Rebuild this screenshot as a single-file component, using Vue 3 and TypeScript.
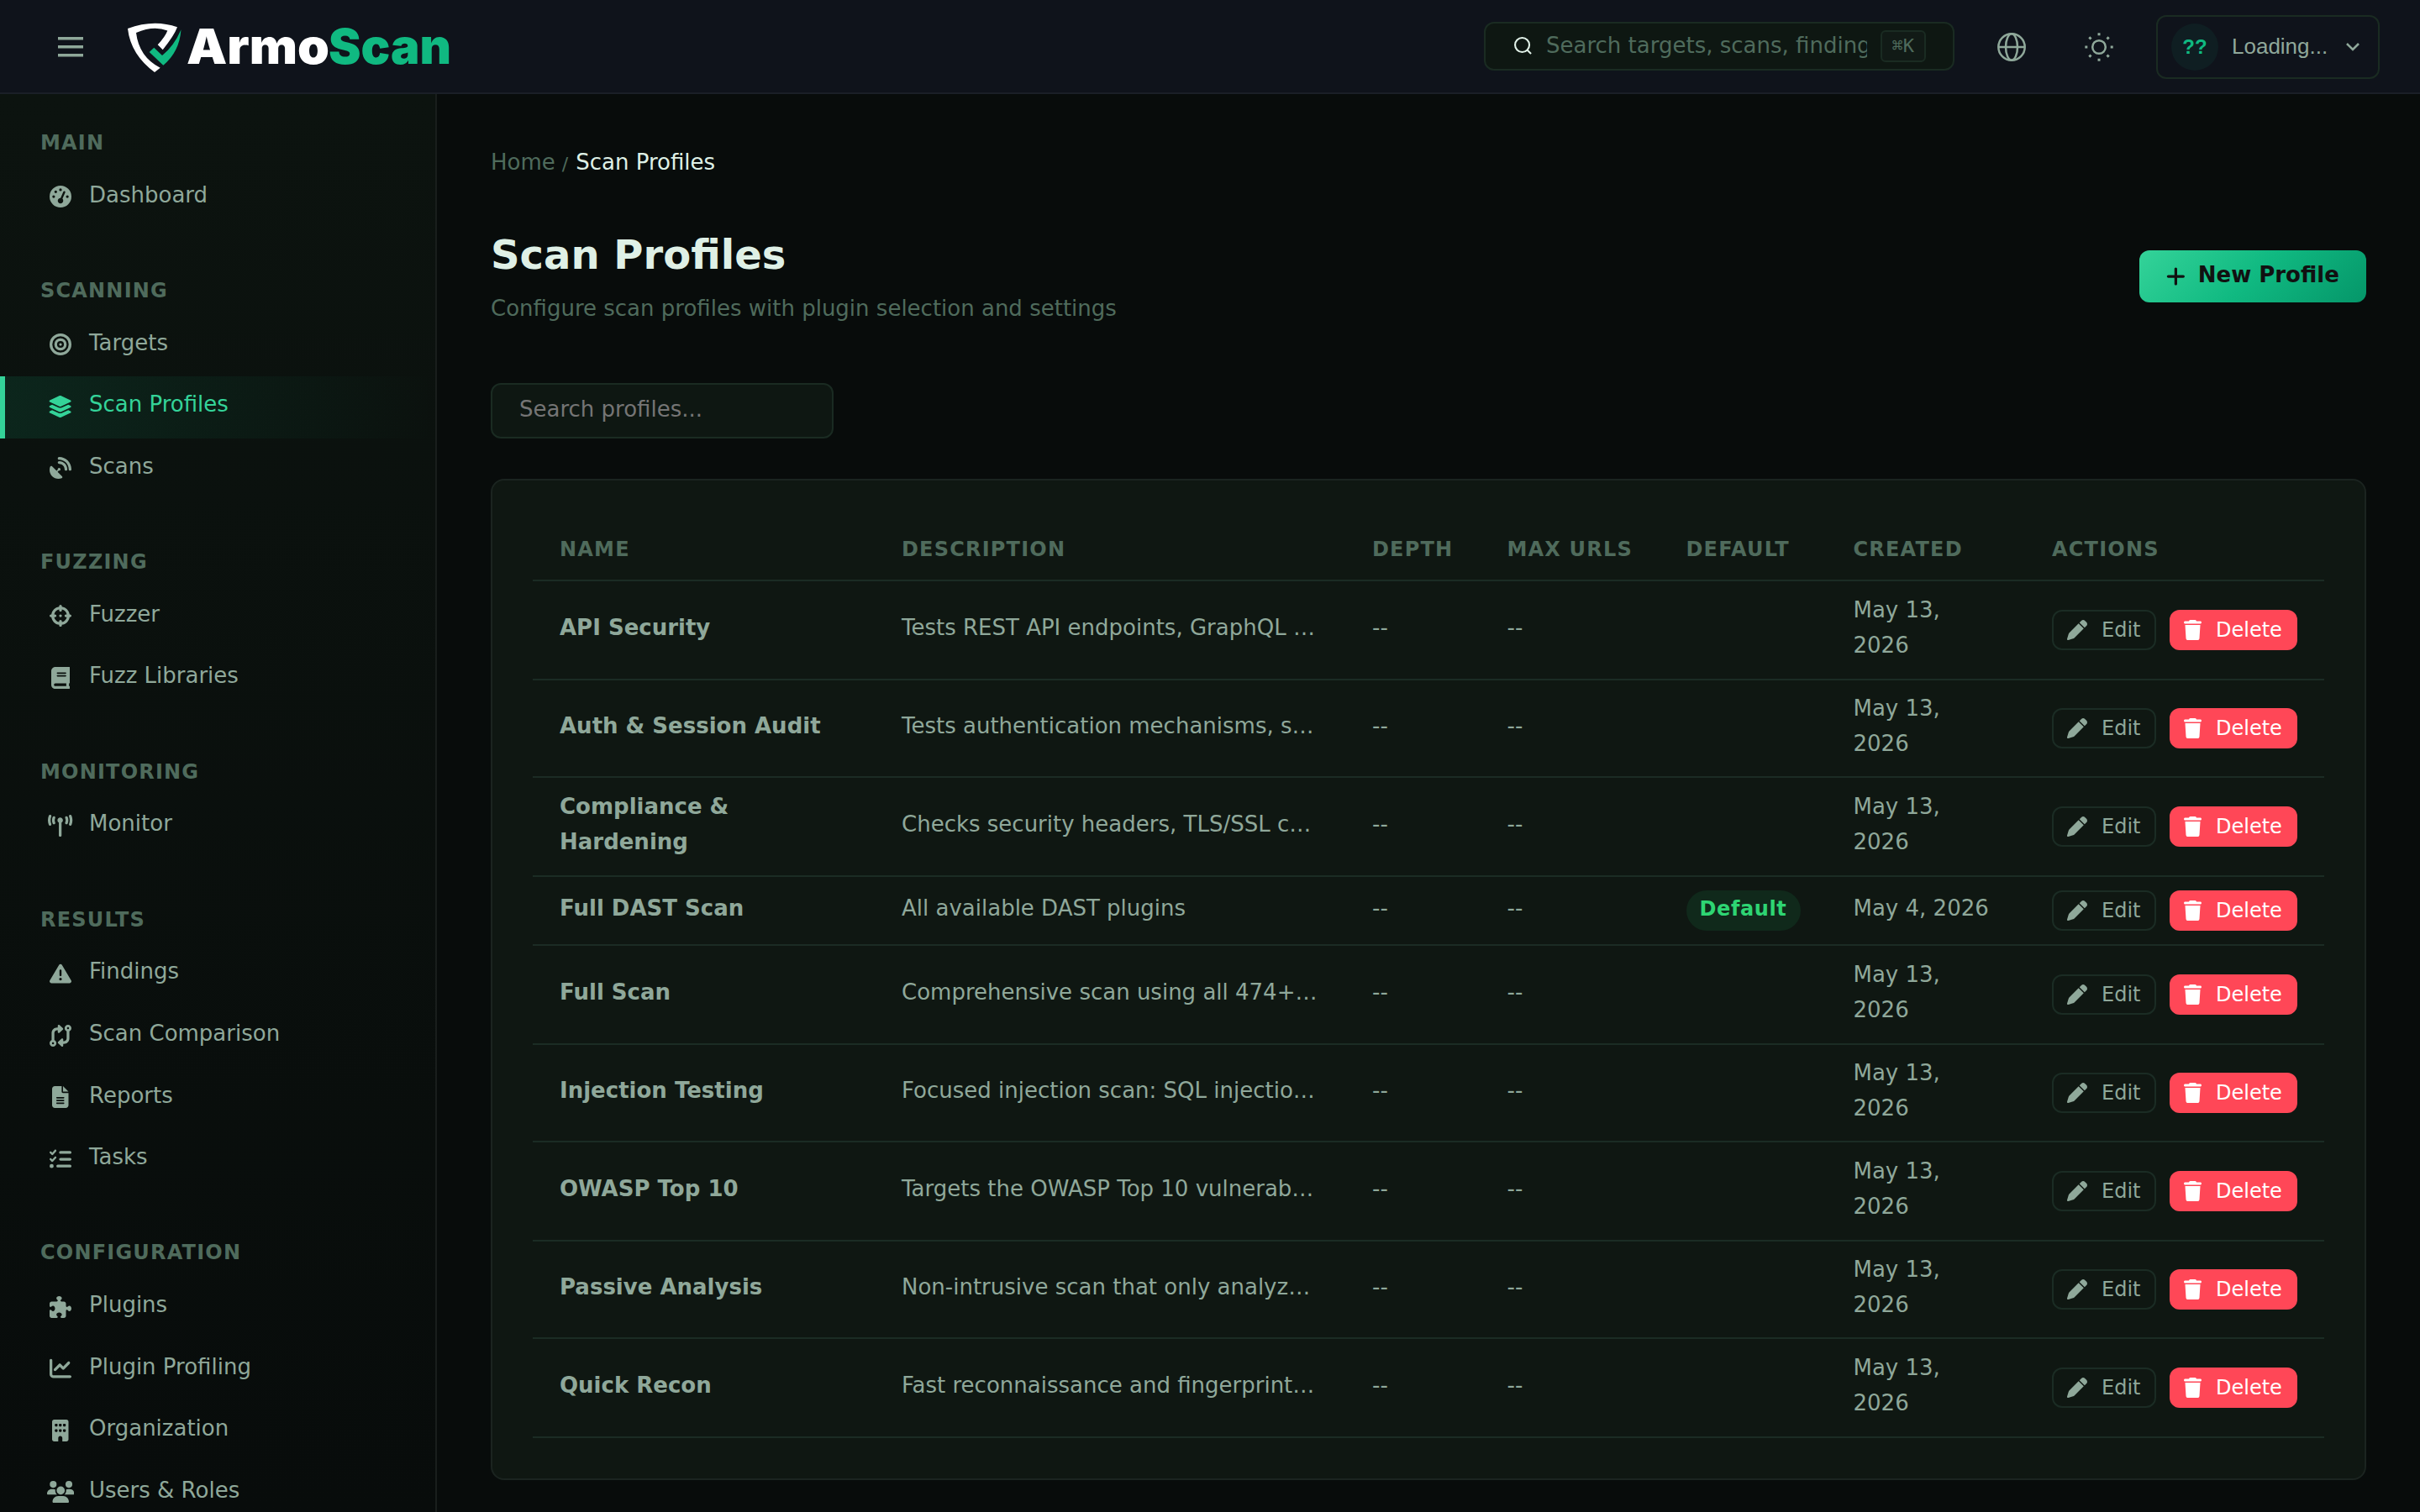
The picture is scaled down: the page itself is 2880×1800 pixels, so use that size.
<script setup lang="ts">
interface Icon {
  box: string
  ratio: number
  d: string
}

interface NavItem {
  label: string
  icon: string
  active?: boolean
}

interface NavSection {
  title: string
  items: NavItem[]
}

interface Profile {
  name: string
  description: string
  depth: string
  maxUrls: string
  isDefault: boolean
  created: string
}

const icon = (width: number, d: string): Icon => ({ box: `0 0 ${width} 512`, ratio: width / 512, d })

const icons: Record<string, Icon> = {
  gauge: icon(512, 'M0 256a256 256 0 1 1 512 0A256 256 0 1 1 0 256zM288 96a32 32 0 1 0 -64 0 32 32 0 1 0 64 0zM256 416c35.3 0 64-28.7 64-64c0-17.4-6.9-33.1-18.1-44.6L366 161.7c5.3-12.1-.2-26.3-12.3-31.6s-26.3 .2-31.6 12.3L257.9 288c-.6 0-1.3 0-1.9 0c-35.3 0-64 28.7-64 64s28.7 64 64 64zM176 144a32 32 0 1 0 -64 0 32 32 0 1 0 64 0zM96 288a32 32 0 1 0 0-64 32 32 0 1 0 0 64zm352-32a32 32 0 1 0 -64 0 32 32 0 1 0 64 0z'),
  bullseye: icon(512, 'M448 256A192 192 0 1 0 64 256a192 192 0 1 0 384 0zM0 256a256 256 0 1 1 512 0A256 256 0 1 1 0 256zm256 80a80 80 0 1 0 0-160 80 80 0 1 0 0 160zm0-224a144 144 0 1 1 0 288 144 144 0 1 1 0-288zM224 256a32 32 0 1 1 64 0 32 32 0 1 1 -64 0z'),
  layers: icon(576, 'M264.5 5.2c14.9-6.9 32.1-6.9 47 0l218.6 101c8.5 3.9 13.9 12.4 13.9 21.8s-5.4 17.9-13.9 21.8l-218.6 101c-14.9 6.9-32.1 6.9-47 0L45.9 149.8C37.4 145.8 32 137.3 32 128s5.4-17.9 13.9-21.8L264.5 5.2zM476.9 209.6l53.2 24.6c8.5 3.9 13.9 12.4 13.9 21.8s-5.4 17.9-13.9 21.8l-218.6 101c-14.9 6.9-32.1 6.9-47 0L45.9 277.8C37.4 273.8 32 265.3 32 256s5.4-17.9 13.9-21.8l53.2-24.6 152 70.2c23.4 10.8 50.4 10.8 73.8 0l152-70.2zm-152 198.2l152-70.2 53.2 24.6c8.5 3.9 13.9 12.4 13.9 21.8s-5.4 17.9-13.9 21.8l-218.6 101c-14.9 6.9-32.1 6.9-47 0L45.9 405.8C37.4 401.8 32 393.3 32 384s5.4-17.9 13.9-21.8l53.2-24.6 152 70.2c23.4 10.8 50.4 10.8 73.8 0z'),
  dish: icon(512, 'M192 32c0-17.7 14.3-32 32-32C383.1 0 512 128.9 512 288c0 17.7-14.3 32-32 32s-32-14.3-32-32C448 164.3 347.7 64 224 64c-17.7 0-32-14.3-32-32zM60.6 220.6L164.7 324.7l28.4-28.4c-.7-2.6-1.1-5.4-1.1-8.3c0-17.7 14.3-32 32-32s32 14.3 32 32s-14.3 32-32 32c-2.9 0-5.6-.4-8.3-1.1l-28.4 28.4L291.4 451.4c14.5 14.5 11.8 38.8-7.3 46.3C260.5 506.9 234.9 512 208 512C93.1 512 0 418.9 0 304c0-26.9 5.1-52.5 14.4-76.1c7.5-19 31.8-21.8 46.3-7.3zM224 96c106 0 192 86 192 192c0 17.7-14.3 32-32 32s-32-14.3-32-32c0-70.7-57.3-128-128-128c-17.7 0-32-14.3-32-32s14.3-32 32-32z'),
  crosshairs: icon(512, 'M256 0c17.7 0 32 14.3 32 32V42.4c93.7 13.9 167.7 88 181.6 181.6H480c17.7 0 32 14.3 32 32s-14.3 32-32 32H469.6c-13.9 93.7-88 167.7-181.6 181.6V480c0 17.7-14.3 32-32 32s-32-14.3-32-32V469.6C130.3 455.7 56.3 381.7 42.4 288H32c-17.7 0-32-14.3-32-32s14.3-32 32-32H42.4C56.3 130.3 130.3 56.3 224 42.4V32c0-17.7 14.3-32 32-32zM107.4 288c12.5 58.3 58.4 104.1 116.6 116.6V384c0-17.7 14.3-32 32-32s32 14.3 32 32v20.6c58.3-12.5 104.1-58.4 116.6-116.6H384c-17.7 0-32-14.3-32-32s14.3-32 32-32h20.6C392.1 165.7 346.3 119.9 288 107.4V128c0 17.7-14.3 32-32 32s-32-14.3-32-32V107.4C165.7 119.9 119.9 165.7 107.4 224H128c17.7 0 32 14.3 32 32s-14.3 32-32 32H107.4zM256 224a32 32 0 1 1 0 64 32 32 0 1 1 0-64z'),
  book: icon(448, 'M96 0C43 0 0 43 0 96V416c0 53 43 96 96 96H384h32c17.7 0 32-14.3 32-32s-14.3-32-32-32V384c17.7 0 32-14.3 32-32V32c0-17.7-14.3-32-32-32H384 96zm0 384H352v64H96c-17.7 0-32-14.3-32-32s14.3-32 32-32zm32-240c0-8.8 7.2-16 16-16H336c8.8 0 16 7.2 16 16s-7.2 16-16 16H144c-8.8 0-16-7.2-16-16zm16 48H336c8.8 0 16 7.2 16 16s-7.2 16-16 16H144c-8.8 0-16-7.2-16-16s7.2-16 16-16z'),
  tower: icon(576, 'M80.3 44C69.8 69.9 64 98.2 64 128s5.8 58.1 16.3 84c6.6 16.4-1.3 35-17.7 41.7s-35-1.3-41.7-17.7C7.4 202.6 0 166.1 0 128S7.4 53.4 20.9 20C27.6 3.6 46.2-4.3 62.6 2.3S86.9 27.6 80.3 44zM555.1 20C568.6 53.4 576 89.9 576 128s-7.4 74.6-20.9 108c-6.6 16.4-25.3 24.3-41.7 17.7S489.1 228.4 495.7 212c10.5-25.9 16.3-54.2 16.3-84s-5.8-58.1-16.3-84C489.1 27.6 497 9 513.4 2.3s35 1.3 41.7 17.7zM352 128c0 23.7-12.9 44.4-32 55.4V480c0 17.7-14.3 32-32 32s-32-14.3-32-32V183.4c-19.1-11.1-32-31.7-32-55.4c0-35.3 28.7-64 64-64s64 28.7 64 64zM170.6 76.8C163.8 92.4 160 109.7 160 128s3.8 35.6 10.6 51.2c7.1 16.2-.3 35.1-16.5 42.1s-35.1-.3-42.1-16.5c-10.3-23.6-16-49.6-16-76.8s5.7-53.2 16-76.8c7.1-16.2 25.9-23.6 42.1-16.5s23.6 25.9 16.5 42.1zM464 51.2c10.3 23.6 16 49.6 16 76.8s-5.7 53.2-16 76.8c-7.1 16.2-25.9 23.6-42.1 16.5s-23.6-25.9-16.5-42.1c6.8-15.6 10.6-32.9 10.6-51.2s-3.8-35.6-10.6-51.2c-7.1-16.2 .3-35.1 16.5-42.1s35.1 .3 42.1 16.5z'),
  warning: icon(512, 'M256 32c14.2 0 27.3 7.5 34.5 19.8l216 368c7.3 12.4 7.3 27.7 .2 40.1S486.3 480 472 480H40c-14.3 0-27.6-7.7-34.7-20.1s-7-27.8 .2-40.1l216-368C228.7 39.5 241.8 32 256 32zm0 128c-13.3 0-24 10.7-24 24V296c0 13.3 10.7 24 24 24s24-10.7 24-24V184c0-13.3-10.7-24-24-24zm32 224a32 32 0 1 0 -64 0 32 32 0 1 0 64 0z'),
  compare: icon(512, 'M320 488c0 9.5-5.6 18.1-14.2 21.9s-18.8 2.3-25.8-4.1l-80-72c-5.1-4.6-7.9-11-7.9-17.8s2.9-13.3 7.9-17.8l80-72c7-6.3 17.2-7.9 25.8-4.1s14.2 12.4 14.2 21.9v40h16c35.3 0 64-28.7 64-64V153.3C371.7 141 352 112.8 352 80c0-44.2 35.8-80 80-80s80 35.8 80 80c0 32.8-19.7 61-48 73.3V320c0 70.7-57.3 128-128 128H320v40zM456 80a24 24 0 1 0 -48 0 24 24 0 1 0 48 0zM192 24c0-9.5 5.6-18.1 14.2-21.9s18.8-2.3 25.8 4.1l80 72c5.1 4.6 7.9 11 7.9 17.8s-2.9 13.3-7.9 17.8l-80 72c-7 6.3-17.2 7.9-25.8 4.1s-14.2-12.4-14.2-21.9V128H176c-35.3 0-64 28.7-64 64V358.7c28.3 12.3 48 40.5 48 73.3c0 44.2-35.8 80-80 80s-80-35.8-80-80c0-32.8 19.7-61 48-73.3V192c0-70.7 57.3-128 128-128h16V24zM56 432a24 24 0 1 0 48 0 24 24 0 1 0 -48 0z'),
  file: icon(384, 'M64 0C28.7 0 0 28.7 0 64V448c0 35.3 28.7 64 64 64H320c35.3 0 64-28.7 64-64V160H256c-17.7 0-32-14.3-32-32V0H64zM256 0V128H384L256 0zM112 256H272c8.8 0 16 7.2 16 16s-7.2 16-16 16H112c-8.8 0-16-7.2-16-16s7.2-16 16-16zm0 64H272c8.8 0 16 7.2 16 16s-7.2 16-16 16H112c-8.8 0-16-7.2-16-16s7.2-16 16-16zm0 64H272c8.8 0 16 7.2 16 16s-7.2 16-16 16H112c-8.8 0-16-7.2-16-16s7.2-16 16-16z'),
  tasks: icon(512, 'M152.1 38.2c9.9 8.9 10.7 24 1.8 33.9l-72 80c-4.4 4.9-10.6 7.8-17.2 7.9s-12.9-2.4-17.6-7L7 113C-2.3 103.6-2.3 88.4 7 79s24.6-9.4 33.9 0l22.1 22.1 55.1-61.2c8.9-9.9 24-10.7 33.9-1.8zm0 160c9.9 8.9 10.7 24 1.8 33.9l-72 80c-4.4 4.9-10.6 7.8-17.2 7.9s-12.9-2.4-17.6-7L7 273c-9.4-9.4-9.4-24.6 0-33.9s24.6-9.4 33.9 0l22.1 22.1 55.1-61.2c8.9-9.9 24-10.7 33.9-1.8zM224 96c0-17.7 14.3-32 32-32H480c17.7 0 32 14.3 32 32s-14.3 32-32 32H256c-17.7 0-32-14.3-32-32zm0 160c0-17.7 14.3-32 32-32H480c17.7 0 32 14.3 32 32s-14.3 32-32 32H256c-17.7 0-32-14.3-32-32zM160 416c0-17.7 14.3-32 32-32H480c17.7 0 32 14.3 32 32s-14.3 32-32 32H192c-17.7 0-32-14.3-32-32zM48 368a48 48 0 1 1 0 96 48 48 0 1 1 0-96z'),
  puzzle: icon(512, 'M192 104.8c0-9.2-5.8-17.3-13.2-22.8C167.2 73.3 160 61.3 160 48c0-26.5 28.7-48 64-48s64 21.5 64 48c0 13.3-7.2 25.3-18.8 34c-7.4 5.5-13.2 13.6-13.2 22.8c0 12.8 10.4 23.2 23.2 23.2H336c26.5 0 48 21.5 48 48v56.8c0 12.8 10.4 23.2 23.2 23.2c9.2 0 17.3-5.8 22.8-13.2c8.7-11.6 20.7-18.8 34-18.8c26.5 0 48 28.7 48 64s-21.5 64-48 64c-13.3 0-25.3-7.2-34-18.8c-5.5-7.4-13.6-13.2-22.8-13.2c-12.8 0-23.2 10.4-23.2 23.2V464c0 26.5-21.5 48-48 48H279.2c-12.8 0-23.2-10.4-23.2-23.2c0-9.2 5.8-17.3 13.2-22.8c11.6-8.7 18.8-20.7 18.8-34c0-26.5-28.7-48-64-48s-64 21.5-64 48c0 13.3 7.2 25.3 18.8 34c7.4 5.5 13.2 13.6 13.2 22.8c0 12.8-10.4 23.2-23.2 23.2H48c-26.5 0-48-21.5-48-48V343.2C0 330.4 10.4 320 23.2 320c9.2 0 17.3 5.8 22.8 13.2C54.7 344.8 66.7 352 80 352c26.5 0 48-28.7 48-64s-21.5-64-48-64c-13.3 0-25.3 7.2-34 18.8C40.5 250.2 32.4 256 23.2 256C10.4 256 0 245.6 0 232.8V176c0-26.5 21.5-48 48-48H168.8c12.8 0 23.2-10.4 23.2-23.2z'),
  chart: icon(512, 'M64 64c0-17.7-14.3-32-32-32S0 46.3 0 64V400c0 44.2 35.8 80 80 80H480c17.7 0 32-14.3 32-32s-14.3-32-32-32H80c-8.8 0-16-7.2-16-16V64zm406.6 86.6c12.5-12.5 12.5-32.8 0-45.3s-32.8-12.5-45.3 0L320 210.7l-57.4-57.4c-12.5-12.5-32.8-12.5-45.3 0l-112 112c-12.5 12.5-12.5 32.8 0 45.3s32.8 12.5 45.3 0L240 221.3l57.4 57.4c12.5 12.5 32.8 12.5 45.3 0l128-128z'),
  building: icon(384, 'M48 0C21.5 0 0 21.5 0 48V464c0 26.5 21.5 48 48 48h96V432c0-26.5 21.5-48 48-48s48 21.5 48 48v80h96c26.5 0 48-21.5 48-48V48c0-26.5-21.5-48-48-48H48zM64 240c0-8.8 7.2-16 16-16h32c8.8 0 16 7.2 16 16v32c0 8.8-7.2 16-16 16H80c-8.8 0-16-7.2-16-16V240zm112-16h32c8.8 0 16 7.2 16 16v32c0 8.8-7.2 16-16 16H176c-8.8 0-16-7.2-16-16V240c0-8.8 7.2-16 16-16zm80 16c0-8.8 7.2-16 16-16h32c8.8 0 16 7.2 16 16v32c0 8.8-7.2 16-16 16H272c-8.8 0-16-7.2-16-16V240zM80 96h32c8.8 0 16 7.2 16 16v32c0 8.8-7.2 16-16 16H80c-8.8 0-16-7.2-16-16V112c0-8.8 7.2-16 16-16zm80 16c0-8.8 7.2-16 16-16h32c8.8 0 16 7.2 16 16v32c0 8.8-7.2 16-16 16H176c-8.8 0-16-7.2-16-16V112zM272 96h32c8.8 0 16 7.2 16 16v32c0 8.8-7.2 16-16 16H272c-8.8 0-16-7.2-16-16V112c0-8.8 7.2-16 16-16z'),
  users: icon(640, 'M144 0a80 80 0 1 1 0 160A80 80 0 1 1 144 0zM512 0a80 80 0 1 1 0 160A80 80 0 1 1 512 0zM0 298.7C0 239.8 47.8 192 106.7 192h42.7c15.9 0 31 3.5 44.6 9.7c-1.3 7.2-1.9 14.7-1.9 22.3c0 38.2 16.8 72.5 43.3 96c-.2 0-.4 0-.7 0H21.3C9.6 320 0 310.4 0 298.7zM405.3 320c-.2 0-.4 0-.7 0c26.6-23.5 43.3-57.8 43.3-96c0-7.6-.7-15-1.9-22.3c13.6-6.3 28.7-9.7 44.6-9.7h42.7C592.2 192 640 239.8 640 298.7c0 11.8-9.6 21.3-21.3 21.3H405.3zM224 224a96 96 0 1 1 192 0 96 96 0 1 1 -192 0zM128 485.3C128 411.7 187.7 352 261.3 352H378.7C452.3 352 512 411.7 512 485.3c0 14.7-11.9 26.7-26.7 26.7H154.7c-14.7 0-26.7-11.9-26.7-26.7z'),
}

const sections: NavSection[] = [
  { title: 'MAIN', items: [{ label: 'Dashboard', icon: 'gauge' }] },
  {
    title: 'SCANNING',
    items: [
      { label: 'Targets', icon: 'bullseye' },
      { label: 'Scan Profiles', icon: 'layers', active: true },
      { label: 'Scans', icon: 'dish' },
    ],
  },
  {
    title: 'FUZZING',
    items: [
      { label: 'Fuzzer', icon: 'crosshairs' },
      { label: 'Fuzz Libraries', icon: 'book' },
    ],
  },
  { title: 'MONITORING', items: [{ label: 'Monitor', icon: 'tower' }] },
  {
    title: 'RESULTS',
    items: [
      { label: 'Findings', icon: 'warning' },
      { label: 'Scan Comparison', icon: 'compare' },
      { label: 'Reports', icon: 'file' },
      { label: 'Tasks', icon: 'tasks' },
    ],
  },
  {
    title: 'CONFIGURATION',
    items: [
      { label: 'Plugins', icon: 'puzzle' },
      { label: 'Plugin Profiling', icon: 'chart' },
      { label: 'Organization', icon: 'building' },
      { label: 'Users & Roles', icon: 'users' },
    ],
  },
]

const columns: string[] = ['NAME', 'DESCRIPTION', 'DEPTH', 'MAX URLS', 'DEFAULT', 'CREATED', 'ACTIONS']

const profile = (name: string, description: string, created = 'May 13, 2026', isDefault = false): Profile => ({
  name,
  description,
  depth: '--',
  maxUrls: '--',
  isDefault,
  created,
})

const profiles: Profile[] = [
  profile('API Security', 'Tests REST API endpoints, GraphQL …'),
  profile('Auth & Session Audit', 'Tests authentication mechanisms, s…'),
  profile('Compliance & Hardening', 'Checks security headers, TLS/SSL c…'),
  profile('Full DAST Scan', 'All available DAST plugins', 'May 4, 2026', true),
  profile('Full Scan', 'Comprehensive scan using all 474+…'),
  profile('Injection Testing', 'Focused injection scan: SQL injectio…'),
  profile('OWASP Top 10', 'Targets the OWASP Top 10 vulnerab…'),
  profile('Passive Analysis', 'Non-intrusive scan that only analyz…'),
  profile('Quick Recon', 'Fast reconnaissance and fingerprint…'),
]
</script>

<template>
  <div class="app">
    <header class="topbar">
      <svg class="burger" viewBox="0 0 30 24">
        <path d="M0 0h30v3.6H0zM0 10h30v3.6H0zM0 20h30v3.6H0z" fill="currentColor" />
      </svg>
      <svg class="logo" viewBox="0 0 386 64">
        <path
          fill="#fff"
          d="M0 8Q31 -3.500 59 6.300Q55.500 16 41.700 33.300L35.700 27.300Q44.500 18 47.300 10.600Q31 4 10 13Q13.500 42 38.700 54.700L32 60Q3.500 39 0 8Z"
        />
        <path
          fill="#10b981"
          d="M25.700 36L31.300 30.700L41 40Q55 29 63.500 9.300Q61.500 36 42.300 51.700Z"
        />
        <text x="70" y="50" class="word" fill="#fff" textLength="170" lengthAdjust="spacingAndGlyphs">Armo</text>
        <text x="239" y="50" class="word" fill="#10b981" textLength="146" lengthAdjust="spacingAndGlyphs">Scan</text>
      </svg>
      <div class="spacer"></div>
      <div class="search">
        <svg class="search-icon" viewBox="0 0 22 22" fill="none" stroke="currentColor" stroke-width="2.200">
          <circle cx="10" cy="10" r="8.900" />
          <path d="M16 16l5 5" />
        </svg>
        <input class="search-text" type="text" placeholder="Search targets, scans, findings..." />
        <kbd>⌘K</kbd>
      </div>
      <svg class="globe" viewBox="0 0 34 34" fill="none" stroke="currentColor" stroke-width="2.500">
        <circle cx="17" cy="17" r="15.700" />
        <ellipse cx="17" cy="17" rx="7" ry="15.700" />
        <path d="M1 17h32" />
      </svg>
      <svg class="sun" viewBox="0 0 34 34" fill="none" stroke="currentColor">
        <circle cx="17" cy="17" r="7.800" stroke-width="2.500" />
        <path
          stroke-width="3"
          d="M17 .3v3M17 30.700v3M.3 17h3M30.700 17h3M5.300 5.300l2.200 2.200M26.500 26.500l2.200 2.200M5.300 28.700l2.200-2.200M26.500 7.500l2.200-2.200"
        />
      </svg>
      <div class="account">
        <span class="avatar">??</span>
        <span class="account-name">Loading...</span>
        <svg class="chevron" viewBox="0 0 16 10" fill="none" stroke="currentColor" stroke-width="2.600">
          <path d="M1 1l7 7 7-7" />
        </svg>
      </div>
    </header>

    <div class="body">
      <aside class="sidebar">
        <nav v-for="section in sections" :key="section.title" class="section">
          <div class="section-title">{{ section.title }}</div>
          <a
            v-for="item in section.items"
            :key="item.label"
            class="nav-item"
            :class="{ active: item.active }"
          >
            <span class="nav-icon">
              <svg
                :viewBox="icons[item.icon].box"
                :style="{ width: `${26 * icons[item.icon].ratio}px` }"
                fill="currentColor"
              >
                <path :d="icons[item.icon].d" />
              </svg>
            </span>
            <span class="nav-label">{{ item.label }}</span>
          </a>
        </nav>
      </aside>

      <main class="main">
        <div class="crumbs">
          <span>Home</span>
          <span class="slash">/</span>
          <span class="here">Scan Profiles</span>
        </div>

        <div class="page-head">
          <div>
            <h1>Scan Profiles</h1>
            <p>Configure scan profiles with plugin selection and settings</p>
          </div>
          <button class="primary">
            <svg viewBox="0 0 448 512" fill="currentColor">
              <path d="M256 80c0-17.700-14.300-32-32-32s-32 14.300-32 32V224H48c-17.700 0-32 14.300-32 32s14.300 32 32 32H192V432c0 17.700 14.300 32 32 32s32-14.300 32-32V288H400c17.700 0 32-14.300 32-32s-14.300-32-32-32H256V80z" />
            </svg>
            <span>New Profile</span>
          </button>
        </div>

        <input class="filter" type="text" placeholder="Search profiles..." />

        <section class="card">
          <table>
            <colgroup>
              <col class="c-name" />
              <col class="c-desc" />
              <col class="c-depth" />
              <col class="c-urls" />
              <col class="c-default" />
              <col class="c-created" />
              <col />
            </colgroup>
            <thead>
              <tr>
                <th v-for="column in columns" :key="column">{{ column }}</th>
              </tr>
            </thead>
            <tbody>
              <tr v-for="row in profiles" :key="row.name" :class="{ single: row.isDefault }">
                <td class="name">{{ row.name }}</td>
                <td class="desc">{{ row.description }}</td>
                <td>{{ row.depth }}</td>
                <td>{{ row.maxUrls }}</td>
                <td class="control"><span v-if="row.isDefault" class="badge">Default</span></td>
                <td>{{ row.created }}</td>
                <td class="control">
                  <div class="actions">
                    <button class="edit">
                      <svg viewBox="0 0 512 512" fill="currentColor">
                        <path d="M362.700 19.300L314.300 67.700 444.300 197.700l48.400-48.400c25-25 25-65.500 0-90.500L453.300 19.300c-25-25-65.500-25-90.500 0zm-71 71L58.600 323.500c-10.400 10.400-18 23.300-22.200 37.400L1 481.200C-1.500 489.700 .8 498.800 7 505s15.300 8.500 23.700 6.100l120.300-35.400c14.100-4.200 27-11.800 37.400-22.200L421.700 220.300 291.700 90.300z" />
                      </svg>
                      <span>Edit</span>
                    </button>
                    <button class="delete">
                      <svg viewBox="0 0 448 512" fill="currentColor">
                        <path d="M135.200 17.700L128 32H32C14.300 32 0 46.300 0 64S14.300 96 32 96H416c17.700 0 32-14.300 32-32s-14.300-32-32-32H320l-7.200-14.300C307.400 6.800 296.300 0 284.200 0H163.800c-12.100 0-23.200 6.800-28.600 17.700zM416 128H32L53.200 467c1.600 25.300 22.600 45 47.900 45H346.900c25.300 0 46.300-19.700 47.900-45L416 128z" />
                      </svg>
                      <span>Delete</span>
                    </button>
                  </div>
                </td>
              </tr>
            </tbody>
          </table>
        </section>
      </main>
    </div>
  </div>
</template>

<style>
html,
body {
  margin: 0;
  background: #080c0b;
}
</style>

<style scoped>
.app {
  display: flex;
  flex-direction: column;
  width: 2880px;
  height: 1800px;
  overflow: hidden;
  background: #080c0b;
  color: #8fa89a;
  font-family: "DejaVu Sans", sans-serif;
  font-size: 26px;
  line-height: 41.6px;
}

.app * {
  box-sizing: border-box;
}

button {
  font-family: inherit;
  line-height: inherit;
}

svg {
  display: block;
  flex: none;
}

/* Top bar */
.topbar {
  display: flex;
  flex: none;
  align-items: center;
  height: 112px;
  padding: 0 48px 0 69px;
  border-bottom: 2px solid #1a1f27;
  background: #0f131b;
}

.burger {
  width: 30px;
  height: 24px;
  margin-top: 2px;
}

.logo {
  width: 386px;
  height: 64px;
  margin-left: 53px;
  margin-top: 6px;
  overflow: visible;
}

.word {
  font-family: Inter, sans-serif;
  font-size: 58px;
  font-weight: 900;
}

.spacer {
  flex: 1;
}

.search {
  display: flex;
  align-items: center;
  width: 560px;
  height: 58px;
  padding: 0 32px 0 34px;
  border: 2px solid #1a2b22;
  border-radius: 12px;
  background: #0e1712;
}

.search-icon {
  width: 21px;
  height: 21px;
  margin-top: -2px;
  color: #e2f2e9;
}

.search-text {
  flex: 1;
  min-width: 0;
  height: 42px;
  margin: 0 16px 0 17px;
  padding: 0 0 3px;
  border: 0;
  outline: 0;
  background: transparent;
  color: #dff0e6;
  font-family: inherit;
  font-size: 26px;
}

.search-text::placeholder {
  color: #4f6b5c;
  opacity: 1;
}

kbd {
  height: 38px;
  padding: 0 12px;
  border: 2px solid #1a2b22;
  border-radius: 6px;
  background: #111a16;
  color: #4f6b5c;
  font-family: "DejaVu Sans Mono", monospace;
  font-size: 22px;
  line-height: 33px;
}

.globe {
  width: 34px;
  height: 34px;
  margin: 2px 0 0 51px;
}

.sun {
  width: 34px;
  height: 34px;
  margin: 2px 51px 0 70px;
}

.account {
  display: flex;
  align-items: center;
  width: 266px;
  height: 76px;
  margin-top: 2px;
  padding: 0 16px;
  border: 2px solid #1a2b22;
  border-radius: 12px;
  font-family: "Liberation Sans", Arial, sans-serif;
}

.avatar {
  width: 56px;
  height: 56px;
  border-radius: 50%;
  background: #0f1e22;
  color: #10b981;
  font-size: 24px;
  font-weight: 700;
  line-height: 56px;
  text-align: center;
}

.account-name {
  flex: 1;
  margin-left: 16px;
}

.chevron {
  width: 16px;
  height: 10px;
  margin-right: 6px;
}

/* Sidebar */
.body {
  display: flex;
  flex: 1;
  min-height: 0;
}

.sidebar {
  flex: none;
  width: 520px;
  padding-top: 32px;
  overflow: hidden;
  border-right: 2px solid #191e1c;
  background: linear-gradient(180deg, #0c130f 0%, #080c0b 100%);
}

.section {
  margin-bottom: 48px;
}

.section-title {
  height: 54.4px;
  padding: 7px 48px 0;
  color: #4f6b5c;
  font-size: 24px;
  font-weight: 700;
  letter-spacing: 1.2px;
  line-height: 38.4px;
}

.nav-item {
  display: flex;
  align-items: center;
  height: 73.6px;
  padding-left: 50px;
  border-left: 6px solid transparent;
}

.nav-item.active {
  border-left-color: #34d399;
  background: linear-gradient(90deg, rgba(16, 185, 129, 0.12), transparent);
  color: #34d399;
}

.nav-icon {
  display: flex;
  justify-content: center;
  width: 32px;
  padding-bottom: 2px;
}

.nav-icon svg {
  height: 26px;
}

.nav-label {
  margin-left: 18px;
  padding-bottom: 5.500px;
}

/* Page */
.main {
  flex: 1;
  min-width: 0;
  padding: 64px;
}

.crumbs {
  display: flex;
  align-items: center;
  height: 42px;
  padding-bottom: 7px;
  color: #4f6b5c;
}

.slash {
  margin: 4px 9px 0 8px;
  font-size: 22px;
}

.here {
  color: #dff0e6;
}

.page-head {
  display: flex;
  align-items: center;
  justify-content: space-between;
  height: 126px;
  margin-top: 48px;
}

h1 {
  margin: 0;
  color: #dff0e6;
  font-size: 48px;
  font-weight: 700;
  line-height: 74px;
}

p {
  margin: 6px 0 4px;
  color: #4f6b5c;
  line-height: 42px;
}

.primary {
  display: flex;
  align-items: center;
  width: 270px;
  height: 62px;
  padding: 0 0 0 32px;
  border: 0;
  border-radius: 12px;
  background: linear-gradient(135deg, #34d399 0%, #10b981 50%, #059669 100%);
  color: #111;
  font-size: 26px;
  font-weight: 700;
}

.primary svg {
  width: 22.75px;
  height: 26px;
}

.primary span {
  margin-left: 15px;
  padding-bottom: 3px;
}

.filter {
  display: block;
  width: 408px;
  height: 66px;
  margin-top: 64px;
  padding: 0 32px 5px;
  border: 2px solid #1a2b22;
  border-radius: 12px;
  background: #0e1712;
  color: #dff0e6;
  font-family: inherit;
  font-size: 26px;
}

.filter::placeholder {
  color: #757575;
}

.card {
  margin-top: 48px;
  padding: 48px;
  border: 2px solid #1b2420;
  border-radius: 16px;
  background: #0f1712;
}

table {
  width: 100%;
  border-spacing: 0;
  table-layout: fixed;
}

.c-name {
  width: 407px;
}

.c-desc {
  width: 560px;
}

.c-depth {
  width: 160.500px;
}

.c-urls {
  width: 213px;
}

.c-default {
  width: 199px;
}

.c-created {
  width: 236.500px;
}

th {
  padding: 15px 32px 17px;
  border-bottom: 2px solid #1b2c24;
  color: #4f6b5c;
  font-size: 24px;
  font-weight: 700;
  letter-spacing: 1.2px;
  line-height: 38px;
  text-align: left;
  white-space: nowrap;
}

td {
  height: 118px;
  padding: 12px 32px 17px;
  border-bottom: 2px solid #1b2c24;
  vertical-align: middle;
}

tr:nth-child(even) td {
  height: 116px;
}

tr.single td {
  height: 82px;
}

td.name {
  font-weight: 700;
}

td.desc {
  overflow: hidden;
  text-overflow: ellipsis;
  white-space: nowrap;
}

td.control {
  padding-top: 16px;
  padding-bottom: 16px;
}

.badge {
  display: block;
  width: 136px;
  height: 48px;
  padding-left: 16px;
  border-radius: 24px;
  background: #10291b;
  color: #2ed573;
  font-size: 24px;
  font-weight: 700;
  letter-spacing: 0.6px;
  line-height: 44px;
}

.actions {
  display: flex;
  gap: 16px;
}

.actions button {
  display: flex;
  align-items: center;
  height: 48px;
  padding: 0 0 0 16px;
  border: 2px solid #1b2c24;
  border-radius: 12px;
  background: transparent;
  color: #8fa89a;
  font-size: 24px;
}

.actions .edit {
  width: 124px;
}

.actions .delete {
  width: 152px;
  padding-left: 15px;
  border-color: #ff4757;
  background: #ff4757;
  color: #fff;
}

.actions svg {
  height: 24px;
}

.edit svg {
  width: 24px;
}

.delete svg {
  width: 21px;
}

.actions span {
  margin-left: 17px;
  padding-top: 1px;
}
</style>
